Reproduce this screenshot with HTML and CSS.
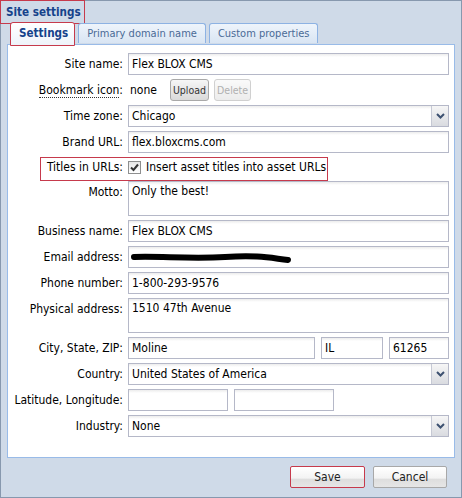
FILE: index.html
```html
<!DOCTYPE html>
<html lang="en">
<head>
<meta charset="utf-8">
<title>Site settings</title>
<link rel="stylesheet" href="styles.css">
</head>
<body>
<div class="window">
  <div class="title"><span class="title-text mark-box">Site settings</span></div>

  <div class="tabs">
    <div class="tab active">Settings</div>
    <div class="tab">Primary domain name</div>
    <div class="tab">Custom properties</div>
  </div>

  <div class="panel">
    <div class="row">
      <label class="label">Site name:</label>
      <div class="input">Flex BLOX CMS</div>
    </div>

    <div class="row">
      <label class="label"><span class="hint">Bookmark icon</span>:</label>
      <div class="inline">
        <span class="plain">none</span>
        <button class="mini">Upload</button>
        <button class="mini" disabled>Delete</button>
      </div>
    </div>

    <div class="row">
      <label class="label">Time zone:</label>
      <div class="input select">Chicago<span class="trigger"><svg width="9" height="6" viewBox="0 0 9 6"><path d="M1 1 L4.5 4.5 L8 1" fill="none" stroke="#3d5170" stroke-width="2"/></svg></span></div>
    </div>

    <div class="row">
      <label class="label">Brand URL:</label>
      <div class="input">flex.bloxcms.com</div>
    </div>

    <div class="row check-row">
      <span class="row-mark"></span>
      <label class="label">Titles in URLs:</label>
      <div class="inline">
        <span class="checkbox"><svg width="9" height="9" viewBox="0 0 9 9"><path d="M1 4.5 L3.5 7 L8 1.5" fill="none" stroke="#333" stroke-width="2"/></svg></span>
        <span class="plain">Insert asset titles into asset URLs</span>
      </div>
    </div>

    <div class="row">
      <label class="label">Motto:</label>
      <div class="input area">Only the best!</div>
    </div>

    <div class="row">
      <label class="label">Business name:</label>
      <div class="input">Flex BLOX CMS</div>
    </div>

    <div class="row">
      <label class="label">Email address:</label>
      <div class="input"><svg class="redact" width="165" height="14" viewBox="0 0 165 14"><path d="M4 6 C30 5, 60 8, 95 6 S 140 7, 158 9" fill="none" stroke="#000" stroke-width="6" stroke-linecap="round"/></svg></div>
    </div>

    <div class="row">
      <label class="label">Phone number:</label>
      <div class="input">1-800-293-9576</div>
    </div>

    <div class="row">
      <label class="label">Physical address:</label>
      <div class="input area">1510 47th Avenue</div>
    </div>

    <div class="row">
      <label class="label">City, State, ZIP:</label>
      <div class="group">
        <div class="input city">Moline</div>
        <div class="input state">IL</div>
        <div class="input zip">61265</div>
      </div>
    </div>

    <div class="row">
      <label class="label">Country:</label>
      <div class="input select">United States of America<span class="trigger"><svg width="9" height="6" viewBox="0 0 9 6"><path d="M1 1 L4.5 4.5 L8 1" fill="none" stroke="#3d5170" stroke-width="2"/></svg></span></div>
    </div>

    <div class="row">
      <label class="label">Latitude, Longitude:</label>
      <div class="group">
        <div class="input coord"></div>
        <div class="input coord"></div>
      </div>
    </div>

    <div class="row">
      <label class="label">Industry:</label>
      <div class="input select">None<span class="trigger"><svg width="9" height="6" viewBox="0 0 9 6"><path d="M1 1 L4.5 4.5 L8 1" fill="none" stroke="#3d5170" stroke-width="2"/></svg></span></div>
    </div>
  </div>

  <div class="footer">
    <button class="btn save">Save</button>
    <button class="btn">Cancel</button>
  </div>
</div>
</body>
</html>
```
FILE: styles.css
```css
* { box-sizing: border-box; }

html, body { margin: 0; }

body {
  font-family: "DejaVu Sans Condensed", "DejaVu Sans", sans-serif;
  font-stretch: condensed;
  font-size: 12px;
  color: #000;
  background: #fff;
}

/* dialog frame */
.window {
  width: 462px;
  height: 498px;
  background: #cfdae8;
  border: 1px solid #8798ae;
  display: flex;
  flex-direction: column;
}

.title { height: 22px; flex: none; }

.title-text {
  display: inline-block;
  height: 24px;
  margin: -1px 0 0 -1px;
  padding: 4px 3px 0 5px;
  font-weight: bold;
  font-size: 11.6px;
  color: #15428b;
  line-height: 15px;
}

.mark-box { border: 1px solid #c63a4c; }

/* tab strip */
.tabs {
  flex: none;
  height: 21px;
  display: flex;
  align-items: flex-end;
  padding-left: 9px;
  gap: 3px;
  position: relative;
  z-index: 1;
}

.tab {
  height: 20px;
  padding: 0 8px;
  border: 1px solid #8db2e3;
  border-bottom: none;
  border-radius: 3px 3px 0 0;
  background: linear-gradient(#eef4fb, #d9e5f3);
  color: #4a6a96;
  font-size: 11px;
  line-height: 19px;
  margin-bottom: 1px;
}

.tab.active {
  height: 24px;
  margin-bottom: -2px;
  margin-top: -1px;
  padding: 0 6px 0 8px;
  border: 1px solid #c63a4c;
  background: linear-gradient(#ffffff, #eef3fa);
  color: #15428b;
  font-weight: bold;
  font-size: 11.6px;
  line-height: 21px;
}

/* form body */
.panel {
  flex: none;
  height: 414px;
  margin: 0 6px;
  border: 1px solid #99bbe8;
  background: #fff;
  padding: 8px 5px 0 0;
}

.row {
  display: flex;
  gap: 5px;
  margin-bottom: 4px;
  position: relative;
}

.label {
  flex: none;
  width: 115px;
  text-align: right;
  line-height: 22px;
  white-space: nowrap;
}

.hint { border-bottom: 1px dotted #333; }

.input {
  flex: 1;
  min-width: 0;
  height: 22px;
  border: 1px solid #b5b8c8;
  background: linear-gradient(#ececec, #fff 3px);
  padding: 0 3px;
  line-height: 20px;
  white-space: nowrap;
  position: relative;
}

.input.area { height: 35px; line-height: 18px; }

.input.select { padding-right: 20px; }

.trigger {
  position: absolute;
  top: 0;
  right: 0;
  width: 17px;
  height: 20px;
  border-left: 1px solid #c6c9d4;
  background: linear-gradient(#f6f6f6, #d9dbe0);
  display: flex;
  align-items: center;
  justify-content: center;
}

.redact { display: block; margin: 4px 0 0 -2px; }

.group { flex: 1; display: flex; gap: 6px; }
.input.city { flex: none; width: 187px; }
.input.state { flex: none; width: 62px; }
.input.zip { flex: 1; }
.input.coord { flex: none; width: 100px; }

.inline {
  display: flex;
  align-items: center;
  gap: 5px;
  height: 22px;
}

.plain { line-height: 22px; }
.inline .plain:first-child { margin: 0 8px 0 2px; }

.mini {
  height: 22px;
  padding: 0 2px;
  border: 1px solid #a9a9a9;
  border-radius: 3px;
  background: linear-gradient(#f6f6f6, #dadada);
  font-family: inherit;
  font-stretch: condensed;
  font-size: 10.5px;
  color: #333;
}

.mini[disabled] {
  border-color: #d0d0d0;
  background: linear-gradient(#fafafa, #ececec);
  color: #b0b0b0;
}

/* checkbox row with its highlight frame */
.check-row .label, .check-row .inline { height: 20px; line-height: 20px; }
.check-row .inline { gap: 5px; }

.row-mark {
  position: absolute;
  left: 32px;
  top: 0;
  width: 288px;
  height: 24px;
  border: 1px solid #c63a4c;
  pointer-events: none;
}

.checkbox {
  width: 13px;
  height: 13px;
  border: 1px solid #8e8f8f;
  background: linear-gradient(#e6e6e6, #fff);
  display: flex;
  align-items: center;
  justify-content: center;
}

.check-row .plain { line-height: 20px; }

/* dialog buttons */
.footer {
  flex: 1;
  display: flex;
  justify-content: flex-end;
  align-items: flex-start;
  gap: 8px;
  padding: 8px 14px 0 0;
}

.btn {
  width: 74px;
  height: 22px;
  border: 1px solid #a8a8a8;
  border-radius: 2px;
  background: linear-gradient(#ffffff 0, #f3f3f3 55%, #dedede 62%, #e6e6e6 100%);
  font-family: inherit;
  font-stretch: condensed;
  font-size: 12px;
  color: #222;
  padding: 0;
}

.btn.save { width: 75px; border-color: #c63a4c; }
```
